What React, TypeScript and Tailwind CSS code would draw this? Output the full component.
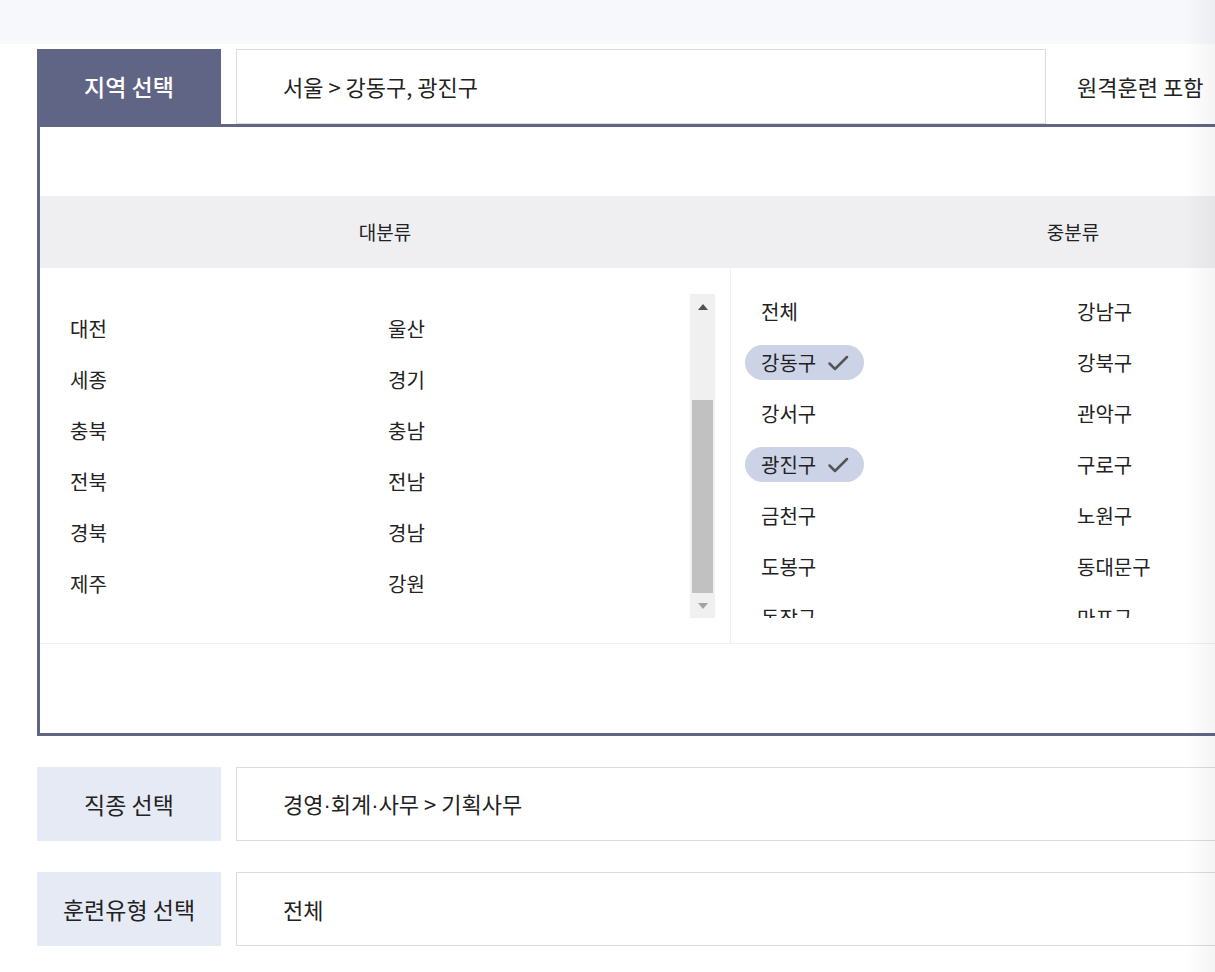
import React from "react";

const font = { fontFamily: '"Noto Sans CJK KR", "Noto Sans", sans-serif' };

function Check() {
  return (
    <svg width="24" height="24" viewBox="0 0 24 24" fill="none" stroke="#555" strokeWidth="2.5" strokeLinecap="round" strokeLinejoin="round">
      <path d="M3.5 12.5l5.5 5.5L21 6" />
    </svg>
  );
}

function Item({ label, selected }: { label: string; selected?: boolean }) {
  return (
    <div className="h-[35px] flex items-center">
      {selected ? (
        <span className="h-[35px] flex items-center gap-[10px] rounded-full bg-[#cdd3e6] pl-4 pr-[14px] text-[20px] text-[#222]">
          {label}
          <Check />
        </span>
      ) : (
        <span className="pl-4 text-[20px] text-[#222]">{label}</span>
      )}
    </div>
  );
}

const Dot = () => <span className="font-['Liberation_Sans']">·</span>;

export default function App() {
  const left = [
    ["대전", "울산"],
    ["세종", "경기"],
    ["충북", "충남"],
    ["전북", "전남"],
    ["경북", "경남"],
    ["제주", "강원"],
  ];
  const right: [string, boolean, string][] = [
    ["전체", false, "강남구"],
    ["강동구", true, "강북구"],
    ["강서구", false, "관악구"],
    ["광진구", true, "구로구"],
    ["금천구", false, "노원구"],
    ["도봉구", false, "동대문구"],
    ["동작구", false, "마포구"],
  ];
  return (
    <div className="relative w-[1215px] h-[972px] overflow-hidden bg-white text-[#222]" style={font}>
      <div className="h-[44px] bg-[#f7f8fc]" />
      <div className="w-[1400px] pl-[37px] pt-[5px]">
        {/* Row 1 */}
        <div className="flex items-stretch h-[75px]">
          <div className="w-[184px] bg-[#616585] flex items-center justify-center text-white text-[23px] font-medium">
            지역 선택
          </div>
          <div className="ml-[15px] w-[810px] border border-[#dcdcdc] flex items-center pl-[46px] text-[22px]">
            서울 &gt; 강동구, 광진구
          </div>
          <div className="ml-[31px] flex items-center text-[22px]">원격훈련 포함</div>
        </div>
        {/* Panel */}
        <div className="w-[1382px] border-[3px] border-[#616585]">
          <div className="h-[69px]" />
          <div className="flex h-[72px] bg-[#efeff2] text-[19px] text-[#222]">
            <div className="w-[690px] flex items-center justify-center">대분류</div>
            <div className="w-[686px] flex items-center justify-center">중분류</div>
          </div>
          <div className="flex border-b border-[#f0f0f0]">
            <div className="w-[690px] pt-[26px] pb-[25px] flex">
              <div className="w-[650px] h-[324px] pl-[14px] pt-[17px]">
                <div className="flex flex-col gap-4">
                  {left.map(([a, b]) => (
                    <div key={a} className="flex">
                      <div className="w-[318px]"><Item label={a} /></div>
                      <div><Item label={b} /></div>
                    </div>
                  ))}
                </div>
              </div>
              <div className="w-[25px] h-[324px] bg-[#f0f0f0] flex flex-col items-center">
                <div className="h-[25px] flex items-center justify-center">
                  <svg width="10" height="6" viewBox="0 0 10 6"><path d="M0 6L5 0L10 6Z" fill="#505050" /></svg>
                </div>
                <div className="h-[81px]" />
                <div className="w-[21px] h-[193px] bg-[#c1c1c1]" />
                <div className="flex-1 flex items-center justify-center">
                  <svg width="10" height="6" viewBox="0 0 10 6"><path d="M0 0L10 0L5 6Z" fill="#a3a3a3" /></svg>
                </div>
              </div>
            </div>
            <div className="w-[686px] border-l border-[#eeeeee] pt-[26px] pb-[25px] pl-[14px]">
              <div className="h-[324px] overflow-hidden">
                <div className="flex flex-col gap-4">
                  {right.map(([a, sel, b]) => (
                    <div key={a} className="flex">
                      <div className="w-[316px]"><Item label={a} selected={sel} /></div>
                      <div><Item label={b} /></div>
                    </div>
                  ))}
                </div>
              </div>
            </div>
          </div>
          <div className="h-[89px]" />
        </div>
        {/* Row 2 */}
        <div className="flex h-[74px] mt-[31px]">
          <div className="w-[184px] bg-[#e6eaf5] flex items-center justify-center text-[23px] text-[#222]">
            직종 선택
          </div>
          <div className="ml-[15px] flex-1 border border-[#dcdcdc] flex items-center pl-[46px] text-[22px]">
            <span>경영<Dot />회계<Dot />사무 &gt; 기획사무</span>
          </div>
        </div>
        {/* Row 3 */}
        <div className="flex h-[74px] mt-[31px]">
          <div className="w-[184px] bg-[#e6eaf5] flex items-center justify-center text-[23px] text-[#222]">
            훈련유형 선택
          </div>
          <div className="ml-[15px] flex-1 border border-[#dcdcdc] flex items-center pl-[46px] text-[22px]">
            전체
          </div>
        </div>
      </div>
      <div className="pointer-events-none absolute top-0 right-0 h-full w-[30px] bg-gradient-to-r from-[rgba(0,0,0,0)] to-[rgba(0,0,0,0.045)]" />
    </div>
  );
}
